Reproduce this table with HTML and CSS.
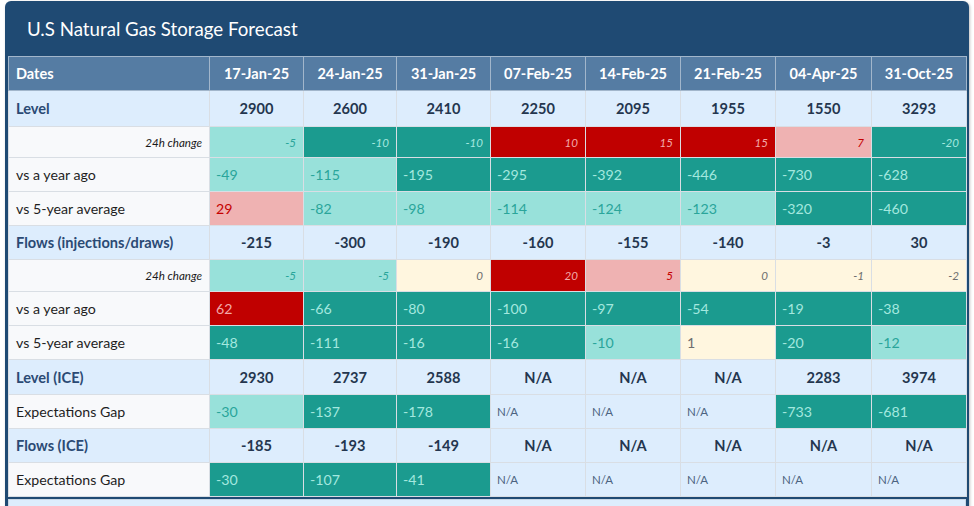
FILE: index.html
```html
<!DOCTYPE html>
<html>
<head>
<meta charset="utf-8">
<link rel="stylesheet" href="styles.css">
</head>
<body>
<div class="card">
  <div class="card-title">U.S Natural Gas Storage Forecast</div>
  <table class="grid">
    <colgroup>
      <col class="c-label"><col class="c94"><col class="c93"><col class="c94"><col class="c95"><col class="c95"><col class="c95"><col class="c96"><col class="c95">
    </colgroup>
    <thead>
      <tr class="r-head">
        <th class="lbl">Dates</th><th>17-Jan-25</th><th>24-Jan-25</th><th>31-Jan-25</th><th>07-Feb-25</th><th>14-Feb-25</th><th>21-Feb-25</th><th>04-Apr-25</th><th>31-Oct-25</th>
      </tr>
    </thead>
    <tbody>
      <tr class="r-main r-first">
        <td class="lbl">Level</td><td>2900</td><td>2600</td><td>2410</td><td>2250</td><td>2095</td><td>1955</td><td>1550</td><td>3293</td>
      </tr>
      <tr class="r-chg">
        <td class="lbl">24h change</td><td class="lt">-5</td><td class="dk">-10</td><td class="dk">-10</td><td class="rd">10</td><td class="rd">15</td><td class="rd">15</td><td class="pk">7</td><td class="dk">-20</td>
      </tr>
      <tr class="r-val">
        <td class="lbl">vs a year ago</td><td class="lt">-49</td><td class="lt">-115</td><td class="dk">-195</td><td class="dk">-295</td><td class="dk">-392</td><td class="dk">-446</td><td class="dk">-730</td><td class="dk">-628</td>
      </tr>
      <tr class="r-val">
        <td class="lbl">vs 5-year average</td><td class="pk">29</td><td class="lt">-82</td><td class="lt">-98</td><td class="lt">-114</td><td class="lt">-124</td><td class="lt">-123</td><td class="dk">-320</td><td class="dk">-460</td>
      </tr>
      <tr class="r-main">
        <td class="lbl">Flows (injections/draws)</td><td>-215</td><td>-300</td><td>-190</td><td>-160</td><td>-155</td><td>-140</td><td>-3</td><td>30</td>
      </tr>
      <tr class="r-chg r-chg2">
        <td class="lbl">24h change</td><td class="lt">-5</td><td class="lt">-5</td><td class="cr">0</td><td class="rd">20</td><td class="pk">5</td><td class="cr">0</td><td class="cr">-1</td><td class="cr">-2</td>
      </tr>
      <tr class="r-val">
        <td class="lbl">vs a year ago</td><td class="rd">62</td><td class="dk">-66</td><td class="dk">-80</td><td class="dk">-100</td><td class="dk">-97</td><td class="dk">-54</td><td class="dk">-19</td><td class="dk">-38</td>
      </tr>
      <tr class="r-val">
        <td class="lbl">vs 5-year average</td><td class="dk">-48</td><td class="dk">-111</td><td class="dk">-16</td><td class="dk">-16</td><td class="lt">-10</td><td class="cr">1</td><td class="dk">-20</td><td class="lt">-12</td>
      </tr>
      <tr class="r-main r-ice">
        <td class="lbl">Level (ICE)</td><td>2930</td><td>2737</td><td>2588</td><td>N/A</td><td>N/A</td><td>N/A</td><td>2283</td><td>3974</td>
      </tr>
      <tr class="r-val">
        <td class="lbl">Expectations Gap</td><td class="lt">-30</td><td class="dk">-137</td><td class="dk">-178</td><td class="na">N/A</td><td class="na">N/A</td><td class="na">N/A</td><td class="dk">-733</td><td class="dk">-681</td>
      </tr>
      <tr class="r-main">
        <td class="lbl">Flows (ICE)</td><td>-185</td><td>-193</td><td>-149</td><td>N/A</td><td>N/A</td><td>N/A</td><td>N/A</td><td>N/A</td>
      </tr>
      <tr class="r-val">
        <td class="lbl">Expectations Gap</td><td class="dk">-30</td><td class="dk">-107</td><td class="dk">-41</td><td class="na">N/A</td><td class="na">N/A</td><td class="na">N/A</td><td class="na">N/A</td><td class="na">N/A</td>
      </tr>
    </tbody>
  </table>
  <div class="card-foot"></div>
</div>
</body>
</html>
```

FILE: styles.css
```css
html, body {
  margin: 0;
  padding: 0;
  background: #ffffff;
}
body {
  padding: 1px 5px 0 5px;
  font-family: Lato, "Open Sans", sans-serif;
  overflow: hidden;
}
.card {
  width: 964px;
  box-sizing: border-box;
  background: #1f4a73;
  border-radius: 6px 6px 0 0;
  padding: 0 3px;
  box-shadow: 1px 1px 3px rgba(0,0,0,0.25);
}
.card-title {
  height: 55px;
  box-sizing: border-box;
  padding: 16px 0 0 19px;
  color: #ffffff;
  font-size: 18.7px;
  line-height: 24px;
}
.grid {
  width: 958px;
  table-layout: fixed;
  border-collapse: collapse;
  font-size: 14.2px;
}
.c-label { width: 201px; }
.c93 { width: 93px; }
.c94 { width: 94px; }
.c95 { width: 95px; }
.c96 { width: 96px; }

.grid th, .grid td {
  border: 1px solid #d9dee4;
  padding: 0 6px;
  white-space: nowrap;
  overflow: hidden;
}
.r-head th {
  height: 33px;
  background: #557ca3;
  color: #ffffff;
  font-weight: 700;
  font-size: 14.5px;
  text-align: center;
  border-color: #a2b6cb;
}
.r-head th.lbl {
  text-align: left;
  padding-left: 7px;
}
.grid td.lbl {
  padding-left: 7px;
  background: #f8f9fb;
  color: #1e1e1e;
}
.r-main td {
  height: 33px;
  background: #ddedfd;
  color: #24364f;
  font-weight: 700;
  font-size: 14.6px;
  text-align: center;
}
.r-first td { height: 35px; }
.r-ice td { height: 34px; }
.r-main td.lbl {
  background: #ddedfd;
  color: #2b4a74;
  text-align: left;
}
.r-val td {
  height: 33px;
  text-align: left;
}
.r-chg td {
  height: 30px;
  text-align: right;
  font-style: italic;
  font-size: 11.6px;
  padding-right: 7px;
}
.r-chg2 td { height: 31px; }
.r-chg td.lbl { color: #1a1a1a; }

.lt { background: #98e1da; color: #2aa59a; }
.dk { background: #1b9b8f; color: #a3e8df; }
.rd { background: #c00000; color: #f2a9a9; }
.pk { background: #efb2b2; color: #c50000; }
.cr { background: #fff6df; color: #6e6e6e; }
.grid td.na { background: #ddedfd; color: #4c6380; font-size: 11.5px; font-weight: 400; }

.card-foot {
  margin-top: 2px;
  height: 20px;
  background: #ddedfd;
  border: 1px solid #c8d6e4;
}
```
